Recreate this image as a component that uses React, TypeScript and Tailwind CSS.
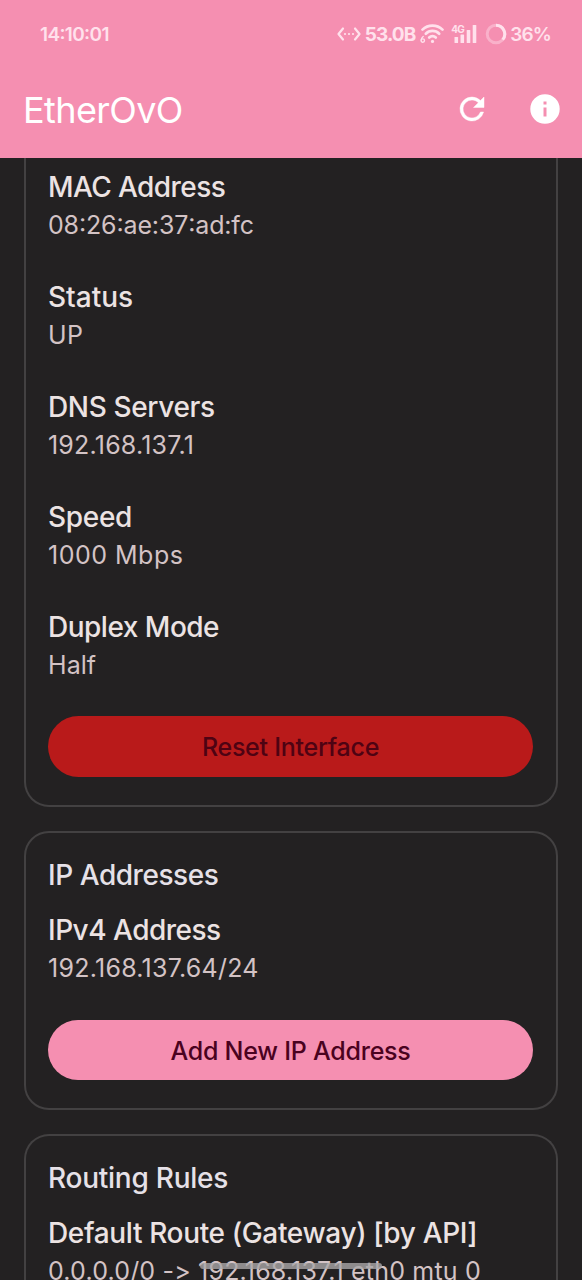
import type { ReactNode } from "react";

interface FieldProps {
  label: string;
  labelTrack: string;
  value: ReactNode;
  valueTrack: string;
  className?: string;
}

function Colon() {
  return <span className="[font-feature-settings:'case']">:</span>;
}

function Field({ label, labelTrack, value, valueTrack, className = "mb-[33px]" }: FieldProps) {
  return (
    <div className={`whitespace-nowrap ${className}`}>
      <div className={`h-[38px] text-[28px] leading-[38px] font-medium text-[#ece3e3] ${labelTrack}`}>{label}</div>
      <div className={`h-[39px] text-[25px] leading-[39px] text-[#d3c3c5] ${valueTrack}`}>{value}</div>
    </div>
  );
}

function Heading({ children, track }: { children: ReactNode; track: string }) {
  return <h2 className={`h-[55px] text-[28px] leading-[38px] font-medium text-[#e6e1e8] ${track}`}>{children}</h2>;
}

function StatusBar() {
  return (
    <div className="flex h-[68px] items-center pr-[31px] pl-[40px] text-[19px] leading-none font-semibold text-[#ffe1ec]">
      <span className="tracking-[-0.65px]">
        14<Colon />10<Colon />01
      </span>
      <div className="ml-auto flex items-center">
        <svg width="24" height="16" viewBox="0 0 24 16" fill="none" stroke="currentColor" strokeWidth="2.200" strokeLinecap="round" strokeLinejoin="round">
          <path d="M6 2.500 1.500 8 6 13.500M18 2.500 22.500 8 18 13.500" />
          <path d="M8 8h.01M12 8h.01M16 8h.01" />
        </svg>
        <span className="ml-[4px] font-bold tracking-[-0.9px]">53.0B</span>
        <svg className="ml-[5px]" width="24" height="20" viewBox="0 0 24 20" fill="none" stroke="currentColor" strokeWidth="2.700" strokeLinecap="round">
          <path d="M2.500 5.600C8 .200 17 .200 22.500 5.600" />
          <path d="M5.800 9.700C9.400 6 15.600 6 19.200 9.700" />
          <path d="M9.200 13.500c1.800-1.800 4.800-1.800 6.600 0" />
          <circle cx="12.500" cy="17.400" r="1.600" fill="currentColor" stroke="none" />
          <circle cx="2.800" cy="16.600" r="1.700" strokeWidth="1.400" />
          <path d="M1.200 16c.2-1.600 1-2.800 2-3.500" strokeWidth="1.400" />
        </svg>
        <div className="relative ml-[7px] h-[20px] w-[27px]">
          <svg width="27" height="20" viewBox="0 0 27 20" fill="currentColor">
            <rect x="3.500" y="13" width="3.600" height="6" rx=".6" />
            <rect x="9.500" y="10.500" width="3.600" height="8.500" rx=".6" />
            <rect x="15.700" y="6" width="3.600" height="13" rx=".6" />
            <rect x="21.700" y="1" width="3.600" height="18" rx=".6" />
          </svg>
          <span className="absolute top-0 left-0 text-[10px] leading-[10px] font-bold tracking-[-0.8px]">4G</span>
        </div>
        <svg className="ml-[7px]" width="22" height="22" viewBox="0 0 22 22" fill="none" stroke="currentColor" strokeWidth="3">
          <circle cx="11" cy="11" r="8.800" opacity=".42" />
          <path d="M11 2.200a8.800 8.800 0 0 1 6.700 14.400" />
        </svg>
        <span className="ml-[3px] tracking-[-0.9px]">36%</span>
      </div>
    </div>
  );
}

function AppBar() {
  return (
    <div className="flex h-[90px] items-center pr-[19px] pb-[6px] pl-[23px] text-white">
      <h1 className="text-[36px] leading-none tracking-[-0.6px]">EtherOvO</h1>
      <svg className="ml-auto -translate-y-px" width="36" height="36" viewBox="0 0 24 24" fill="currentColor" stroke="currentColor" strokeWidth=".3">
        <path d="M17.650 6.350A7.958 7.958 0 0 0 12 4a8 8 0 1 0 7.730 10h-2.080A6 6 0 1 1 12 6c1.660 0 3.140.690 4.220 1.780L13 11h7V4z" />
      </svg>
      <svg className="ml-[37px] -translate-y-px" width="36" height="36" viewBox="0 0 24 24" fill="currentColor">
        <path fillRule="evenodd" d="M12 2.200a9.800 9.800 0 1 0 0 19.600 9.800 9.800 0 0 0 0-19.600zm1 14.800h-2v-6h2zm0-8h-2V7h2z" />
      </svg>
    </div>
  );
}

export default function App() {
  return (
    <div className="flex h-[1280px] flex-col overflow-hidden bg-[#232122] font-['Inter',sans-serif]">
      <header className="h-[158px] shrink-0 bg-[#f58fb1]">
        <StatusBar />
        <AppBar />
      </header>
      <main className="relative flex min-h-0 grow flex-col overflow-hidden px-[24px]">
        <section className="h-[649px] shrink-0 rounded-b-[25px] border-2 border-t-0 border-[#434142] px-[22px] pt-[10px]">
          <Field
            label="MAC Address"
            labelTrack="tracking-[-0.58px]"
            value={<>08<Colon />26<Colon />ae:37<Colon />ad:fc</>}
            valueTrack="tracking-[-0.15px]"
          />
          <Field label="Status" labelTrack="tracking-[0px]" value="UP" valueTrack="tracking-[0.5px]" />
          <Field label="DNS Servers" labelTrack="tracking-[-0.35px]" value="192.168.137.1" valueTrack="tracking-[0.2px]" />
          <Field label="Speed" labelTrack="tracking-[-0.3px]" value="1000 Mbps" valueTrack="tracking-[0.5px]" />
          <Field label="Duplex Mode" labelTrack="tracking-[-0.5px]" value="Half" valueTrack="tracking-[0.05px]" className="mb-[31px]" />
          <button className="block h-[61px] w-[485px] rounded-full bg-[#b91a1a] text-[25px] leading-[63px] font-medium tracking-[-0.26px] text-[#4e0313]">
            Reset Interface
          </button>
        </section>
        <section className="mt-[24px] h-[279px] shrink-0 rounded-[25px] border-2 border-[#434142] px-[22px] pt-[23px]">
          <Heading track="tracking-[-0.45px]">IP Addresses</Heading>
          <Field label="IPv4 Address" labelTrack="tracking-[-0.5px]" value="192.168.137.64/24" valueTrack="tracking-[0.25px]" className="mb-[32px]" />
          <button className="block h-[60px] w-[485px] rounded-full bg-[#f58fb1] text-[25px] leading-[62px] font-medium tracking-[-0.24px] text-[#4a0220]">
            Add New IP Address
          </button>
        </section>
        <section className="mt-[24px] h-[200px] shrink-0 rounded-t-[25px] border-2 border-b-0 border-[#434142] px-[22px] pt-[23px]">
          <Heading track="tracking-[-0.25px]">Routing Rules</Heading>
          <Field
            label="Default Route (Gateway) [by API]"
            labelTrack="tracking-[-0.35px]"
            value="0.0.0.0/0 -> 192.168.137.1 eth0 mtu 0"
            valueTrack="[font-variant-ligatures:none] tracking-[0.18px]"
          />
        </section>
        <div className="absolute bottom-[11px] left-[200px] h-[6px] w-[182px] rounded-full bg-[#a9a6a7]/80" />
      </main>
    </div>
  );
}
